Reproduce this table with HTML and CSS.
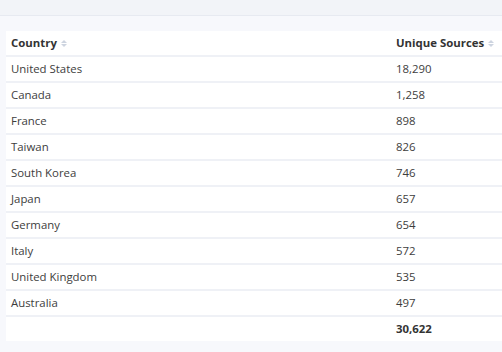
FILE: index.html
```html
<!DOCTYPE html>
<html>
<head>
<meta charset="utf-8">
<link rel="stylesheet" href="styles.css">
</head>
<body>
<div class="topbar"></div>
<div class="content">
  <table class="grid">
    <thead>
      <tr>
        <th class="c1">Country<span class="sort"><i class="up"></i><i class="down"></i></span></th>
        <th class="c2">Unique Sources<span class="sort"><i class="up"></i><i class="down"></i></span></th>
      </tr>
    </thead>
    <tbody>
      <tr><td>United States</td><td>18,290</td></tr>
      <tr><td>Canada</td><td>1,258</td></tr>
      <tr><td>France</td><td>898</td></tr>
      <tr><td>Taiwan</td><td>826</td></tr>
      <tr><td>South Korea</td><td>746</td></tr>
      <tr><td>Japan</td><td>657</td></tr>
      <tr><td>Germany</td><td>654</td></tr>
      <tr><td>Italy</td><td>572</td></tr>
      <tr><td>United Kingdom</td><td>535</td></tr>
      <tr><td>Australia</td><td>497</td></tr>
    </tbody>
    <tfoot>
      <tr><td></td><td class="total">30,622</td></tr>
    </tfoot>
  </table>
</div>
</body>
</html>
```
FILE: styles.css
```css
html, body {
  margin: 0;
  padding: 0;
  background: #f7f8fc;
  font-family: "Open Sans", "Noto Sans", sans-serif;
  font-size: 11.4px;
  color: #3d3d3d;
}
.topbar {
  height: 15px;
  background: #f2f4f8;
  border-bottom: 1px solid #e7eaf1;
}
.content {
  padding: 15px 0 0 6px;
}
.grid {
  width: 100%;
  border-collapse: collapse;
  background: #fff;
}
.grid th, .grid td {
  height: 24px;
  padding: 0 5px;
  text-align: left;
  line-height: 24px;
  border-bottom: 2px solid #eff1f6;
}
.grid tfoot td {
  border-bottom: none;
}
.grid th {
  font-weight: 700;
  color: #333;
}
.grid .c1 {
  width: 375px;
}
.total {
  font-weight: 700;
  color: #333;
}
.sort {
  display: inline-block;
  margin-left: 4px;
  vertical-align: 0;
}
.sort i {
  display: block;
  width: 0;
  height: 0;
  border-left: 3px solid transparent;
  border-right: 3px solid transparent;
}
.sort .up {
  border-bottom: 3.5px solid #cdd4e0;
  margin-bottom: 1px;
}
.sort .down {
  border-top: 3.5px solid #cdd4e0;
}
```
